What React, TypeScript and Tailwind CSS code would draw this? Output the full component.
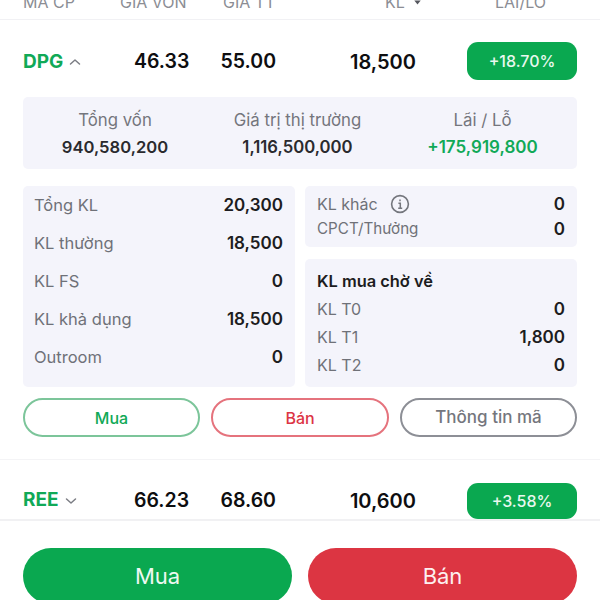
import React from "react";

const font = { fontFamily: "Inter, 'Noto Sans', sans-serif" };

function Row({ label, value, cls, labelCls = "text-[16.5px]" }: { label: React.ReactNode; value: string; cls: string; labelCls?: string }) {
  return (
    <div className={`flex items-center justify-between ${cls}`}>
      <span className={`${labelCls} text-[#6f7178]`}>{label}</span>
      <span className="pt-[1px] text-[17px] font-semibold text-[#1c1c20]">{value}</span>
    </div>
  );
}

function Stat({ label, value, cls }: { label: string; value: string; cls: string }) {
  return (
    <div className="flex flex-col items-center gap-[3px]">
      <span className="text-[16.8px] leading-[24px] text-[#74767d]">{label}</span>
      <span className={`leading-[24px] font-semibold ${cls}`}>{value}</span>
    </div>
  );
}

function Chevron({ up }: { up?: boolean }) {
  return (
    <svg width="12" height="8" viewBox="0 0 12 8" fill="none" stroke="#7b7d84" strokeWidth="1.5" strokeLinecap="round" strokeLinejoin="round">
      <path d={up ? "M1.5 6 6 2l4.5 4" : "M1.5 2 6 6l4.5-4"} />
    </svg>
  );
}

function StockRow({ code, up, a, b, c, pct, h, pill, text = "" }: { code: string; up?: boolean; a: string; b: string; c: string; pct: string; h: string; pill: string; text?: string }) {
  return (
    <div className={`flex items-center pl-[23px] ${h}`}>
      <div className={`flex w-[111px] items-center gap-[6px] ${text}`}>
        <span className="text-[19px] font-bold text-[#10a957]">{code}</span>
        <Chevron up={up} />
      </div>
      <span className={`w-[54px] text-right text-[19.5px] font-semibold text-[#0e0e10] ${text}`}>{a}</span>
      <span className={`w-[88px] text-right text-[19.5px] font-semibold text-[#0e0e10] ${text}`}>{b}</span>
      <span className={`w-[140px] text-right text-[20px] font-semibold text-[#0e0e10] ${text}`}>{c}</span>
      <span className={`ml-[51px] flex w-[110px] items-center justify-center rounded-[11px] bg-[#0aa850] text-[16px] font-medium text-[#e9f8ef] ${pill}`}>{pct}</span>
    </div>
  );
}

export default function App() {
  return (
    <div className="h-[600px] w-[600px] overflow-hidden bg-white" style={font}>
      <div className="mt-[-12px] flex h-[32px] items-start border-b border-[#f1f1f4] pl-[23px] text-[16px] leading-[28px] text-[#8b8d94]">
        <span className="w-[97px]">MÃ CP</span>
        <span className="w-[68px]">GIÁ VỐN</span>
        <span className="ml-[35px] w-[60px]">GIÁ TT</span>
        <span className="ml-[102px] flex w-[45px] items-center gap-[9px]">
          KL
          <svg width="7" height="5" viewBox="0 0 7 5" fill="#55575e"><path d="M0.3 0.5h6.4L3.5 4.5z" /></svg>
        </span>
        <span className="ml-[65px]">LÃI/LỖ</span>
      </div>

      <StockRow code="DPG" up a="46.33" b="55.00" c="18,500" pct="+18.70%" h="h-[77px] pt-[5px]" pill="h-[38px]" text="pt-[2px]" />

      <div className="mx-[23px] grid h-[72px] grid-cols-[184px_181px_189px] items-center rounded-[5px] bg-[#f4f4fb]">
        <Stat label="Tổng vốn" value="940,580,200" cls="text-[16.6px] text-[#2a2a2e]" />
        <Stat label="Giá trị thị trường" value="1,116,500,000" cls="text-[16.7px] text-[#2a2a2e]" />
        <Stat label="Lãi / Lỗ" value="+175,919,800" cls="text-[17px] text-[#10a957]" />
      </div>

      <div className="mx-[23px] mt-[17px] grid h-[201px] grid-cols-2 gap-[10px]">
        <div className="flex flex-col justify-between rounded-[5px] bg-[#f4f4fb] pt-[6px] pr-[12px] pb-[17px] pl-[11px]">
          <Row label="Tổng KL" value="20,300" cls="h-[26px]" />
          <Row label="KL thường" value="18,500" cls="h-[26px]" />
          <Row label="KL FS" value="0" cls="h-[26px]" />
          <Row label="KL khả dụng" value="18,500" cls="h-[26px]" />
          <Row label="Outroom" value="0" cls="h-[26px]" />
        </div>
        <div className="flex flex-col gap-[12px]">
          <div className="flex h-[61px] flex-col gap-[1px] rounded-[5px] bg-[#f4f4fb] px-[12px] pt-[6px]">
            <Row
              labelCls="text-[16px]"
              label={
                <span className="flex items-center gap-[12px]">
                  KL khác
                  <svg width="20" height="20" viewBox="0 0 20 20" fill="none" stroke="#74767d">
                    <circle cx="10" cy="10" r="8.4" strokeWidth="1.6" />
                    <path d="M10 5.6v1.6M8.4 9.2H10.3V14M8.2 14.2h4" strokeWidth="1.5" />
                  </svg>
                </span>
              }
              value="0"
              cls="h-[24px]"
            />
            <Row labelCls="text-[15.2px]" label="CPCT/Thưởng" value="0" cls="h-[24px]" />
          </div>
          <div className="flex flex-1 flex-col rounded-[5px] bg-[#f4f4fb] px-[12px] pt-[9px]">
            <span className="h-[27px] text-[16.4px] leading-[26px] font-semibold text-[#1c1c20]">KL mua chờ về</span>
            <Row labelCls="text-[16px]" label="KL T0" value="0" cls="h-[28px]" />
            <Row labelCls="text-[16px]" label="KL T1" value="1,800" cls="h-[28px]" />
            <Row labelCls="text-[16px]" label="KL T2" value="0" cls="h-[28px]" />
          </div>
        </div>
      </div>

      <div className="mx-[23px] mt-[11px] flex justify-between">
        <button className="h-[39px] w-[177px] rounded-full border-2 border-[#7cc59a] text-[16px] font-medium text-[#10a957]">Mua</button>
        <button className="h-[39px] w-[178px] rounded-full border-2 border-[#e5737d] text-[16px] font-medium text-[#dc3545]">Bán</button>
        <button className="h-[39px] w-[177px] rounded-full border-2 border-[#8d8f96] text-[17px] font-medium text-[#74767d]">Thông tin mã</button>
      </div>

      <div className="mt-[22px] h-[1px] bg-[#f4f4f6]" />

      <div className="border-b-2 border-[#f1f1f3]">
        <StockRow code="REE" a="66.23" b="68.60" c="10,600" pct="+3.58%" h="h-[59px] pt-[22px]" pill="h-[36px]" />
      </div>

      <div className="mx-[23px] mt-[27px] flex justify-between">
        <button className="h-[56px] w-[269px] rounded-[28px] bg-[#0aa850] text-[22px] text-[#eef9f2]">Mua</button>
        <button className="h-[56px] w-[269px] rounded-[28px] bg-[#dc3542] text-[22px] text-[#fdf0f0]">Bán</button>
      </div>
    </div>
  );
}
